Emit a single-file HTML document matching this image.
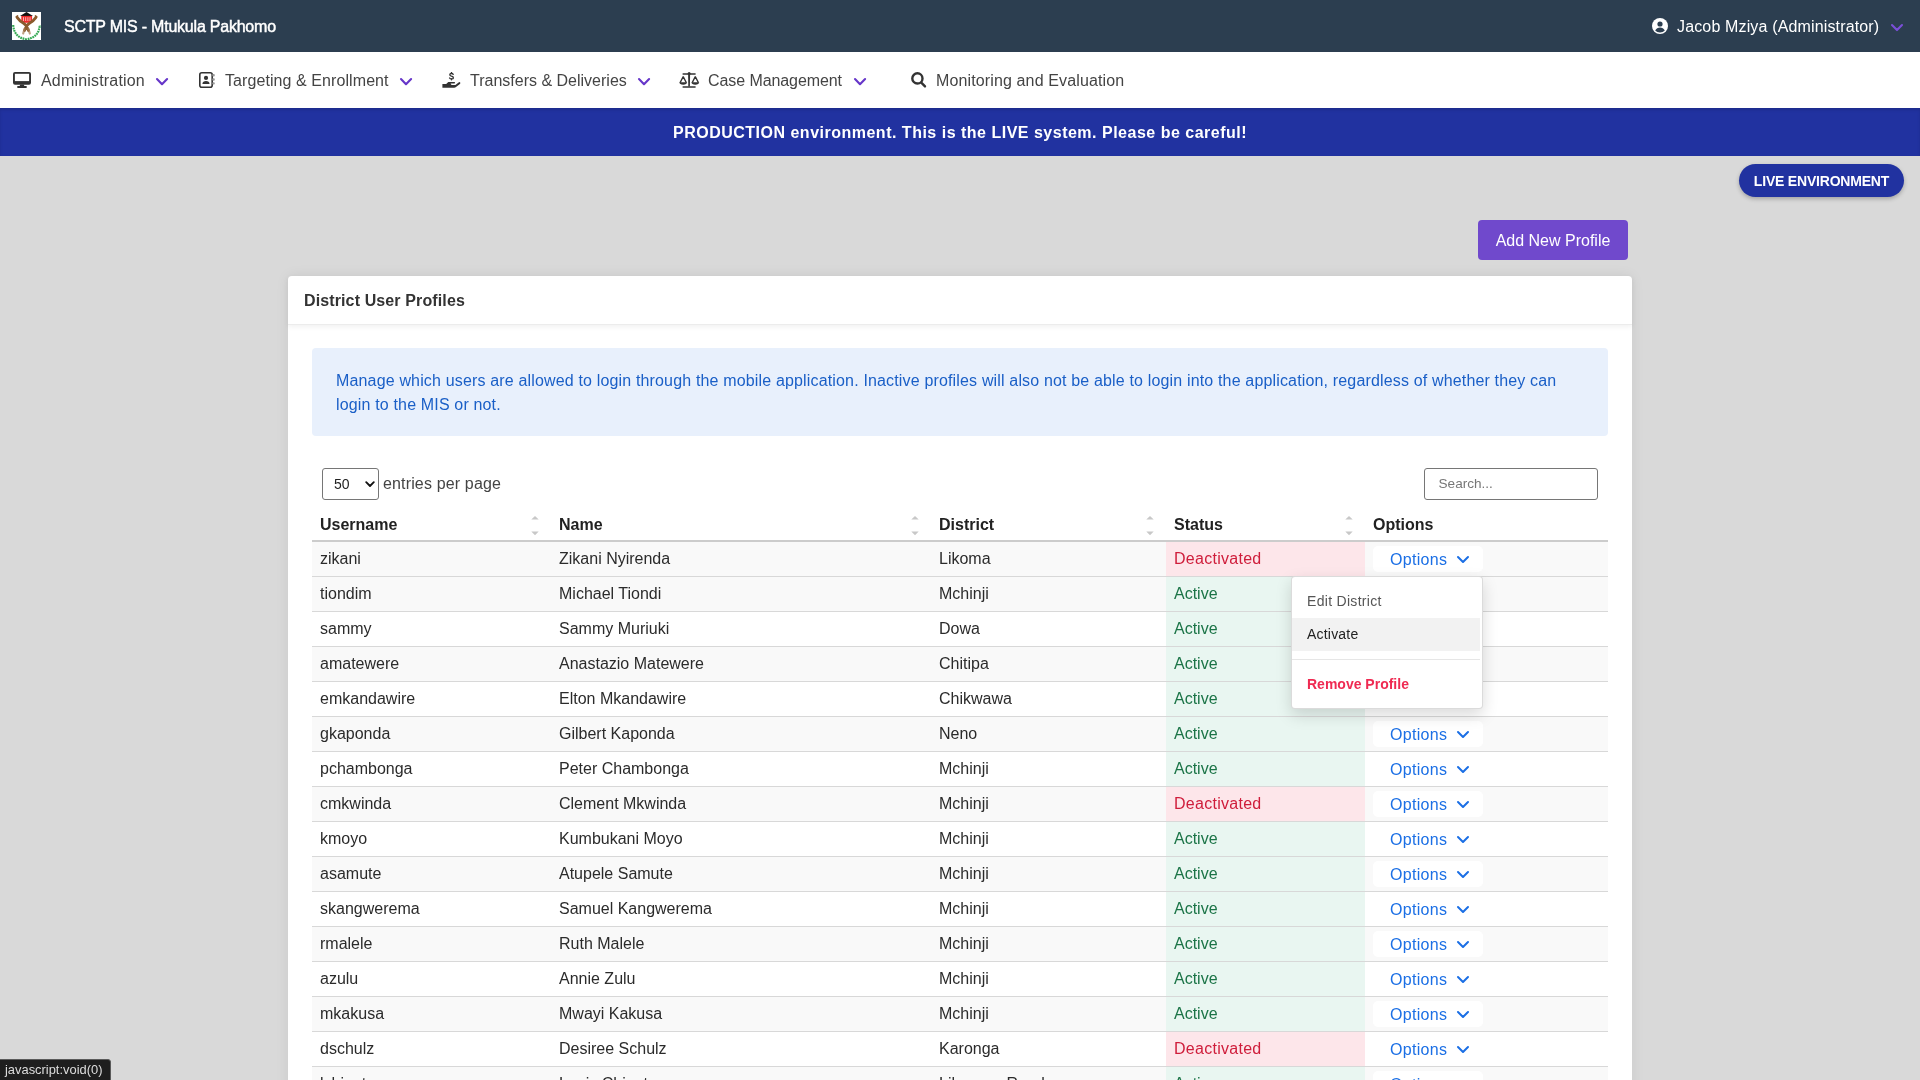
<!DOCTYPE html>
<html><head><meta charset="utf-8">
<style>
*{box-sizing:border-box;margin:0;padding:0}
html,body{width:1920px;height:1080px;overflow:hidden}
body{font-family:"Liberation Sans",sans-serif;font-size:16px;line-height:24px;background:#d9d9d9;color:#333;position:relative}
.abs{position:absolute}
#top{left:0;top:0;width:1920px;height:52px;background:#2c3e50}
#logo{left:12px;top:12px;width:29px;height:28px;background:#fff}
#title{left:64px;top:15px;color:#fff;font-weight:normal;-webkit-text-stroke:0.45px #fff;font-size:16px;letter-spacing:-0.22px;line-height:24px;white-space:nowrap}
#user{left:1652px;top:15px;color:#fff;white-space:nowrap}
#nav{left:0;top:52px;width:1920px;height:56px;background:#fff}
.ni{position:absolute;top:17px;white-space:nowrap;color:#444}
.chev{position:absolute}
#banner{left:0;top:108px;width:1920px;height:48px;background:#2132a0;box-shadow:inset 0 2px 3px rgba(0,0,0,.12);color:#fff;font-weight:bold;text-align:center;line-height:50px;letter-spacing:0.5px;overflow:hidden}
#live{left:1739px;top:164px;width:165px;height:33px;border-radius:17px;background:#2132a0;color:#fff;font-weight:bold;font-size:14px;letter-spacing:-0.2px;text-align:center;line-height:34px;box-shadow:0 2px 4px rgba(0,0,0,.25)}
#addbtn{left:1478px;top:220px;width:150px;height:40px;border-radius:4px;background:#7049cc;color:#fff;text-align:center;line-height:42px}
#card{left:288px;top:276px;width:1344px;height:900px;background:#fff;border-radius:4px;box-shadow:0 0 14px rgba(0,0,0,.07)}
#cardhead{left:0;top:0;width:1344px;height:49px;border-bottom:1px solid #ececec;box-shadow:0 2px 5px rgba(0,0,0,.06);padding:13px 16px;font-weight:bold;letter-spacing:0.12px}
#alert{left:24px;top:72px;width:1296px;height:88px;background:#e8f0fc;color:#1a5fc7;border-radius:4px;padding:21px 24px;letter-spacing:0.16px}
#sel{left:34px;top:192px;width:57px;height:32px;border:1px solid #767676;border-radius:3px;background:#fff;font-size:14px;line-height:31px;padding-left:11px;color:#222}
#epp{left:95px;top:196px;color:#444;letter-spacing:0.15px}
#search{left:1136px;top:192px;width:174px;height:32px;border:1px solid #767676;border-radius:3px;background:#fff;font-size:13.6px;line-height:30px;padding-left:13.5px;color:#777}
table{position:absolute;left:24px;top:228px;width:1296px;border-collapse:separate;border-spacing:0;table-layout:fixed}
th{box-sizing:content-box;text-align:left;font-weight:bold;color:#222;padding:9px 8px 3px;height:24px;border-bottom:2px solid #ccc;position:relative;line-height:24px}
td{box-sizing:content-box;padding:5px 8px;height:24px;border-bottom:1px solid #d8d8d8;line-height:24px;color:#2b2b2b;white-space:nowrap;position:relative}
tr.g td{background:#f9f9f9}
tr td.de{background:#fde6ea;color:#cf1d3b;letter-spacing:0.27px}
tr td.ac{background:#e9f6f1;color:#1b7447}
.sort{position:absolute;right:12px;top:12px}
.opt{position:absolute;left:8px;top:4px;background:#fff;border-radius:5px;width:110px;height:26px;line-height:28px;padding-left:17px;color:#1b6fe5;letter-spacing:0.3px}
.oc{position:absolute;left:83px;top:9px}
#logo{left:12px;top:12px}
#tip{left:-1px;top:1059px;width:112px;height:22px;background:#1e1e1e;border:1px solid #5a5a5a;border-top-right-radius:3px;color:#ddd;font-size:12.9px;line-height:20px;padding-left:5px;letter-spacing:0}
#dd{left:1291px;top:575.5px;width:191.5px;height:133px;background:#fff;border:1px solid rgba(0,0,0,.14);border-radius:4px;box-shadow:0 6px 16px rgba(0,0,0,.15)}
.di{position:absolute;left:0;width:188px;height:33px;padding-left:15px;font-size:14px;line-height:33px;white-space:nowrap}
.hov{background:#f2f2f2}
#ddiv{left:0;top:82px;width:188px;height:1px;background:#e6e6e6}
#root{position:absolute;left:0;top:0;width:1920px;height:1080px;overflow:hidden;will-change:transform;background:#d9d9d9}
</style></head><body><div id="root">
<div id="top" class="abs">
  <svg id="logo" class="abs" width="29" height="28" viewBox="0 0 29 28"><rect width="29" height="28" fill="#fff"/><path d="M8 4 L14.5 0.1 L21 4Z" fill="#111"/><rect x="9.3" y="3.9" width="10.8" height="6.9" fill="#ee2b2b"/><path d="M11.5 5.2 V9 M13.7 5.2 V9 M15.9 5.2 V9 M18 5.2 V9" stroke="#fff" stroke-width=".8" opacity=".8"/><path d="M5.3 5.6 Q8 9.5 11.5 11.2 Q14.5 13 16.5 18.5 M23.8 5.6 Q21 9.5 17.5 11.2 Q14.5 13 12.5 18.5" fill="none" stroke="#8a5a2c" stroke-width="2.8" stroke-linecap="round"/><path d="M16.5 17 L17.8 21.5 M12.5 17 L11.2 21.5" stroke="#a57a50" stroke-width="2.2" stroke-linecap="round" opacity=".7"/><path d="M4.2 5 L5.6 3.9 M24.8 5 L23.4 3.9" stroke="#8a5a2c" stroke-width="1.6" stroke-linecap="round"/><path d="M1.2 13 Q2 25.5 14.5 27.3 Q27 25.5 27.8 13" fill="none" stroke="#34a853" stroke-width="2.2" stroke-dasharray="1.8 .7"/></svg>
  <div id="title" class="abs">SCTP MIS - Mtukula Pakhomo</div>
  <div id="user" class="abs">
    <svg class="abs" style="left:0;top:3px" width="16" height="16" viewBox="0 0 16 16"><circle cx="8" cy="8" r="8" fill="#fff"/><circle cx="8" cy="6" r="2.6" fill="#2c3e50"/><path d="M3.2 12.6 C4.2 10.6 6 9.6 8 9.6 C10 9.6 11.8 10.6 12.8 12.6 C11.6 13.8 9.9 14.5 8 14.5 C6.1 14.5 4.4 13.8 3.2 12.6Z" fill="#2c3e50"/></svg>
    <span class="abs" style="left:25px;top:0;letter-spacing:0.15px">Jacob Mziya (Administrator)</span>
    <svg class="abs" style="left:237.7px;top:7.5px" width="14" height="9" viewBox="0 0 14 9"><path d="M2 2 L7 7.1 L12 2" fill="none" stroke="#7a4fd8" stroke-width="2.1" stroke-linecap="round" stroke-linejoin="round"/></svg>
  </div>
</div>
<div id="nav" class="abs">
  <svg class="abs" style="left:13px;top:20px" width="18" height="16" viewBox="0 0 18 16"><rect x="0" y="0" width="18" height="12.7" rx="2" fill="#333"/><rect x="1.9" y="1.8" width="14.2" height="7.3" fill="#fff"/><path d="M7.3 12.5 L10.7 12.5 L11.6 14.6 L6.4 14.6Z" fill="#333"/><rect x="4.1" y="14.1" width="9.8" height="1.8" rx=".9" fill="#333"/></svg>
  <span class="ni" style="left:41px;letter-spacing:0.18px">Administration</span>
  <svg class="chev" style="left:155px;top:24.9px" width="14" height="9" viewBox="0 0 14 9"><path d="M2 2 L7 7.2 L12.1 2" fill="none" stroke="#6636c9" stroke-width="2.1" stroke-linecap="round" stroke-linejoin="round"/></svg>
  <svg class="abs" style="left:199px;top:20px" width="17" height="16" viewBox="0 0 17 16"><rect x="0.8" y="0.8" width="12.4" height="14.4" rx="2" fill="none" stroke="#333" stroke-width="1.6"/><circle cx="7" cy="5.9" r="2.1" fill="#333"/><path d="M3.4 11.9 Q3.7 9.1 7 9.1 Q10.3 9.1 10.6 11.9Z" fill="#333"/><rect x="13.2" y="2.1" width="2.6" height="2.4" rx="1" fill="#999"/><rect x="13.2" y="6.3" width="2.6" height="2.4" rx="1" fill="#999"/><rect x="13.2" y="10.2" width="2.6" height="2.4" rx="1" fill="#999"/></svg>
  <span class="ni" style="left:225px;letter-spacing:0.08px">Targeting &amp; Enrollment</span>
  <svg class="chev" style="left:399px;top:24.9px" width="14" height="9" viewBox="0 0 14 9"><path d="M2 2 L7 7.2 L12.1 2" fill="none" stroke="#6636c9" stroke-width="2.1" stroke-linecap="round" stroke-linejoin="round"/></svg>
  <svg class="abs" style="left:442px;top:20px" width="19" height="16" viewBox="0 0 19 16"><path d="M9.5 0.3 V1.5 M9.5 6.7 V7.8 M11.2 2.4 Q10.8 1.4 9.5 1.4 Q7.8 1.4 7.8 2.8 Q7.8 3.8 9.5 4.2 Q11.4 4.6 11.4 5.9 Q11.4 6.9 9.5 6.9 Q8.1 6.9 7.6 6" fill="none" stroke="#333" stroke-width="1.35" stroke-linecap="round"/><path d="M0.4 12 L4.2 12 L6.3 10.1 Q6.7 9.9 7.3 9.9 L12.3 9.9 Q13.1 9.9 13.1 10.8 Q13.1 11.6 12.3 11.6 L8.6 11.6 Q8.9 12.9 9.8 12.9 L13.4 12.9 L16.6 10.4 Q17.6 9.7 18.2 10.4 Q18.7 11.2 17.9 11.9 L14 15.1 Q13.3 15.8 12.2 15.8 L0.4 15.8Z" fill="#333"/></svg>
  <span class="ni" style="left:470px">Transfers &amp; Deliveries</span>
  <svg class="chev" style="left:637px;top:24.9px" width="14" height="9" viewBox="0 0 14 9"><path d="M2 2 L7 7.2 L12.1 2" fill="none" stroke="#6636c9" stroke-width="2.1" stroke-linecap="round" stroke-linejoin="round"/></svg>
  <svg class="abs" style="left:678px;top:20px" width="22" height="16" viewBox="0 0 22 16"><rect x="4.4" y="1.2" width="13.4" height="1.6" rx=".8" fill="#333"/><circle cx="11.1" cy="1.6" r="1.5" fill="#333"/><path d="M10.1 2.5 L12.1 2.5 L11.9 14.5 L10.3 14.5Z" fill="#333"/><rect x="4.4" y="14.2" width="13.4" height="1.6" rx=".8" fill="#333"/><path d="M5.2 4.6 L2.1 10.6 M5.2 4.6 L8.3 10.6 M17.3 4.6 L14.2 10.6 M17.3 4.6 L20.4 10.6" fill="none" stroke="#333" stroke-width="1.3"/><path d="M1.3 10.3 L9.1 10.3 Q8.9 12.7 5.2 12.7 Q1.5 12.7 1.3 10.3Z M13.4 10.3 L21.2 10.3 Q21 12.7 17.3 12.7 Q13.6 12.7 13.4 10.3Z" fill="#333"/></svg>
  <span class="ni" style="left:708px;letter-spacing:-0.08px">Case Management</span>
  <svg class="chev" style="left:853px;top:24.9px" width="14" height="9" viewBox="0 0 14 9"><path d="M2 2 L7 7.2 L12.1 2" fill="none" stroke="#6636c9" stroke-width="2.1" stroke-linecap="round" stroke-linejoin="round"/></svg>
  <svg class="abs" style="left:910px;top:20px" width="17" height="17" viewBox="0 0 17 17"><circle cx="7.4" cy="6.4" r="5.1" fill="none" stroke="#333" stroke-width="2.4"/><path d="M11.3 10.6 L15 14.4" stroke="#333" stroke-width="2.4" stroke-linecap="round"/></svg>
  <span class="ni" style="left:936px;letter-spacing:0.13px">Monitoring and Evaluation</span>
</div>
<div id="banner" class="abs">PRODUCTION environment. This is the LIVE system. Please be careful!</div>
<div id="live" class="abs">LIVE ENVIRONMENT</div>
<div id="addbtn" class="abs">Add New Profile</div>
<div id="card" class="abs">
  <div id="cardhead" class="abs">District User Profiles</div>
  <div id="alert" class="abs">Manage which users are allowed to login through the mobile application. Inactive profiles will also not be able to login into the application, regardless of whether they can<br>login to the MIS or not.</div>
  <div id="sel" class="abs">50<svg class="abs" style="left:42px;top:12px" width="10" height="7" viewBox="0 0 10 7"><path d="M1.2 1.2 L5 5 L8.8 1.2" fill="none" stroke="#111" stroke-width="1.8" stroke-linecap="round" stroke-linejoin="round"/></svg></div>
  <div id="epp" class="abs">entries per page</div>
  <div id="search" class="abs">Search...</div>
  <table>
    <colgroup><col style="width:239px"><col style="width:380px"><col style="width:235px"><col style="width:199px"><col style="width:243px"></colgroup>
    <thead><tr><th>Username<svg class="sort" width="8" height="20" viewBox="0 0 8 20"><path d="M0.3 3.6 L4 0 L7.7 3.6Z M0.3 15.6 L4 19.2 L7.7 15.6Z" fill="#c8c8c8"/></svg></th><th>Name<svg class="sort" width="8" height="20" viewBox="0 0 8 20"><path d="M0.3 3.6 L4 0 L7.7 3.6Z M0.3 15.6 L4 19.2 L7.7 15.6Z" fill="#c8c8c8"/></svg></th><th>District<svg class="sort" width="8" height="20" viewBox="0 0 8 20"><path d="M0.3 3.6 L4 0 L7.7 3.6Z M0.3 15.6 L4 19.2 L7.7 15.6Z" fill="#c8c8c8"/></svg></th><th>Status<svg class="sort" width="8" height="20" viewBox="0 0 8 20"><path d="M0.3 3.6 L4 0 L7.7 3.6Z M0.3 15.6 L4 19.2 L7.7 15.6Z" fill="#c8c8c8"/></svg></th><th>Options</th></tr></thead>
    <tbody id="tb">
<tr class="g"><td>zikani</td><td>Zikani Nyirenda</td><td>Likoma</td><td class="de">Deactivated</td><td><span class="opt">Options<svg class="oc" width="14" height="9" viewBox="0 0 14 9"><path d="M2 2 L7 7 L12 2" fill="none" stroke="#1b6fe5" stroke-width="2" stroke-linecap="round" stroke-linejoin="round"/></svg></span></td></tr>
<tr class="g"><td>tiondim</td><td>Michael Tiondi</td><td>Mchinji</td><td class="ac">Active</td><td><span class="opt">Options<svg class="oc" width="14" height="9" viewBox="0 0 14 9"><path d="M2 2 L7 7 L12 2" fill="none" stroke="#1b6fe5" stroke-width="2" stroke-linecap="round" stroke-linejoin="round"/></svg></span></td></tr>
<tr><td>sammy</td><td>Sammy Muriuki</td><td>Dowa</td><td class="ac">Active</td><td><span class="opt">Options<svg class="oc" width="14" height="9" viewBox="0 0 14 9"><path d="M2 2 L7 7 L12 2" fill="none" stroke="#1b6fe5" stroke-width="2" stroke-linecap="round" stroke-linejoin="round"/></svg></span></td></tr>
<tr class="g"><td>amatewere</td><td>Anastazio Matewere</td><td>Chitipa</td><td class="ac">Active</td><td><span class="opt">Options<svg class="oc" width="14" height="9" viewBox="0 0 14 9"><path d="M2 2 L7 7 L12 2" fill="none" stroke="#1b6fe5" stroke-width="2" stroke-linecap="round" stroke-linejoin="round"/></svg></span></td></tr>
<tr><td>emkandawire</td><td>Elton Mkandawire</td><td>Chikwawa</td><td class="ac">Active</td><td><span class="opt">Options<svg class="oc" width="14" height="9" viewBox="0 0 14 9"><path d="M2 2 L7 7 L12 2" fill="none" stroke="#1b6fe5" stroke-width="2" stroke-linecap="round" stroke-linejoin="round"/></svg></span></td></tr>
<tr class="g"><td>gkaponda</td><td>Gilbert Kaponda</td><td>Neno</td><td class="ac">Active</td><td><span class="opt">Options<svg class="oc" width="14" height="9" viewBox="0 0 14 9"><path d="M2 2 L7 7 L12 2" fill="none" stroke="#1b6fe5" stroke-width="2" stroke-linecap="round" stroke-linejoin="round"/></svg></span></td></tr>
<tr><td>pchambonga</td><td>Peter Chambonga</td><td>Mchinji</td><td class="ac">Active</td><td><span class="opt">Options<svg class="oc" width="14" height="9" viewBox="0 0 14 9"><path d="M2 2 L7 7 L12 2" fill="none" stroke="#1b6fe5" stroke-width="2" stroke-linecap="round" stroke-linejoin="round"/></svg></span></td></tr>
<tr class="g"><td>cmkwinda</td><td>Clement Mkwinda</td><td>Mchinji</td><td class="de">Deactivated</td><td><span class="opt">Options<svg class="oc" width="14" height="9" viewBox="0 0 14 9"><path d="M2 2 L7 7 L12 2" fill="none" stroke="#1b6fe5" stroke-width="2" stroke-linecap="round" stroke-linejoin="round"/></svg></span></td></tr>
<tr><td>kmoyo</td><td>Kumbukani Moyo</td><td>Mchinji</td><td class="ac">Active</td><td><span class="opt">Options<svg class="oc" width="14" height="9" viewBox="0 0 14 9"><path d="M2 2 L7 7 L12 2" fill="none" stroke="#1b6fe5" stroke-width="2" stroke-linecap="round" stroke-linejoin="round"/></svg></span></td></tr>
<tr class="g"><td>asamute</td><td>Atupele Samute</td><td>Mchinji</td><td class="ac">Active</td><td><span class="opt">Options<svg class="oc" width="14" height="9" viewBox="0 0 14 9"><path d="M2 2 L7 7 L12 2" fill="none" stroke="#1b6fe5" stroke-width="2" stroke-linecap="round" stroke-linejoin="round"/></svg></span></td></tr>
<tr><td>skangwerema</td><td>Samuel Kangwerema</td><td>Mchinji</td><td class="ac">Active</td><td><span class="opt">Options<svg class="oc" width="14" height="9" viewBox="0 0 14 9"><path d="M2 2 L7 7 L12 2" fill="none" stroke="#1b6fe5" stroke-width="2" stroke-linecap="round" stroke-linejoin="round"/></svg></span></td></tr>
<tr class="g"><td>rmalele</td><td>Ruth Malele</td><td>Mchinji</td><td class="ac">Active</td><td><span class="opt">Options<svg class="oc" width="14" height="9" viewBox="0 0 14 9"><path d="M2 2 L7 7 L12 2" fill="none" stroke="#1b6fe5" stroke-width="2" stroke-linecap="round" stroke-linejoin="round"/></svg></span></td></tr>
<tr><td>azulu</td><td>Annie Zulu</td><td>Mchinji</td><td class="ac">Active</td><td><span class="opt">Options<svg class="oc" width="14" height="9" viewBox="0 0 14 9"><path d="M2 2 L7 7 L12 2" fill="none" stroke="#1b6fe5" stroke-width="2" stroke-linecap="round" stroke-linejoin="round"/></svg></span></td></tr>
<tr class="g"><td>mkakusa</td><td>Mwayi Kakusa</td><td>Mchinji</td><td class="ac">Active</td><td><span class="opt">Options<svg class="oc" width="14" height="9" viewBox="0 0 14 9"><path d="M2 2 L7 7 L12 2" fill="none" stroke="#1b6fe5" stroke-width="2" stroke-linecap="round" stroke-linejoin="round"/></svg></span></td></tr>
<tr><td>dschulz</td><td>Desiree Schulz</td><td>Karonga</td><td class="de">Deactivated</td><td><span class="opt">Options<svg class="oc" width="14" height="9" viewBox="0 0 14 9"><path d="M2 2 L7 7 L12 2" fill="none" stroke="#1b6fe5" stroke-width="2" stroke-linecap="round" stroke-linejoin="round"/></svg></span></td></tr>
<tr class="g"><td>lchiguta</td><td>Louis Chiguta</td><td>Lilongwe Rural</td><td class="ac">Active</td><td><span class="opt">Options<svg class="oc" width="14" height="9" viewBox="0 0 14 9"><path d="M2 2 L7 7 L12 2" fill="none" stroke="#1b6fe5" stroke-width="2" stroke-linecap="round" stroke-linejoin="round"/></svg></span></td></tr>
</tbody>
  </table>
</div>
<div id="tip" class="abs">javascript:void(0)</div>
<div id="dd" class="abs">
  <div class="di" style="top:8px;color:#555;letter-spacing:0.3px">Edit District</div>
  <div class="di hov" style="top:41px;color:#222;letter-spacing:0.2px">Activate</div>
  <div id="ddiv" class="abs"></div>
  <div class="di" style="top:91px;color:#ef2a52;font-weight:bold">Remove Profile</div>
</div>
</div></body></html>
